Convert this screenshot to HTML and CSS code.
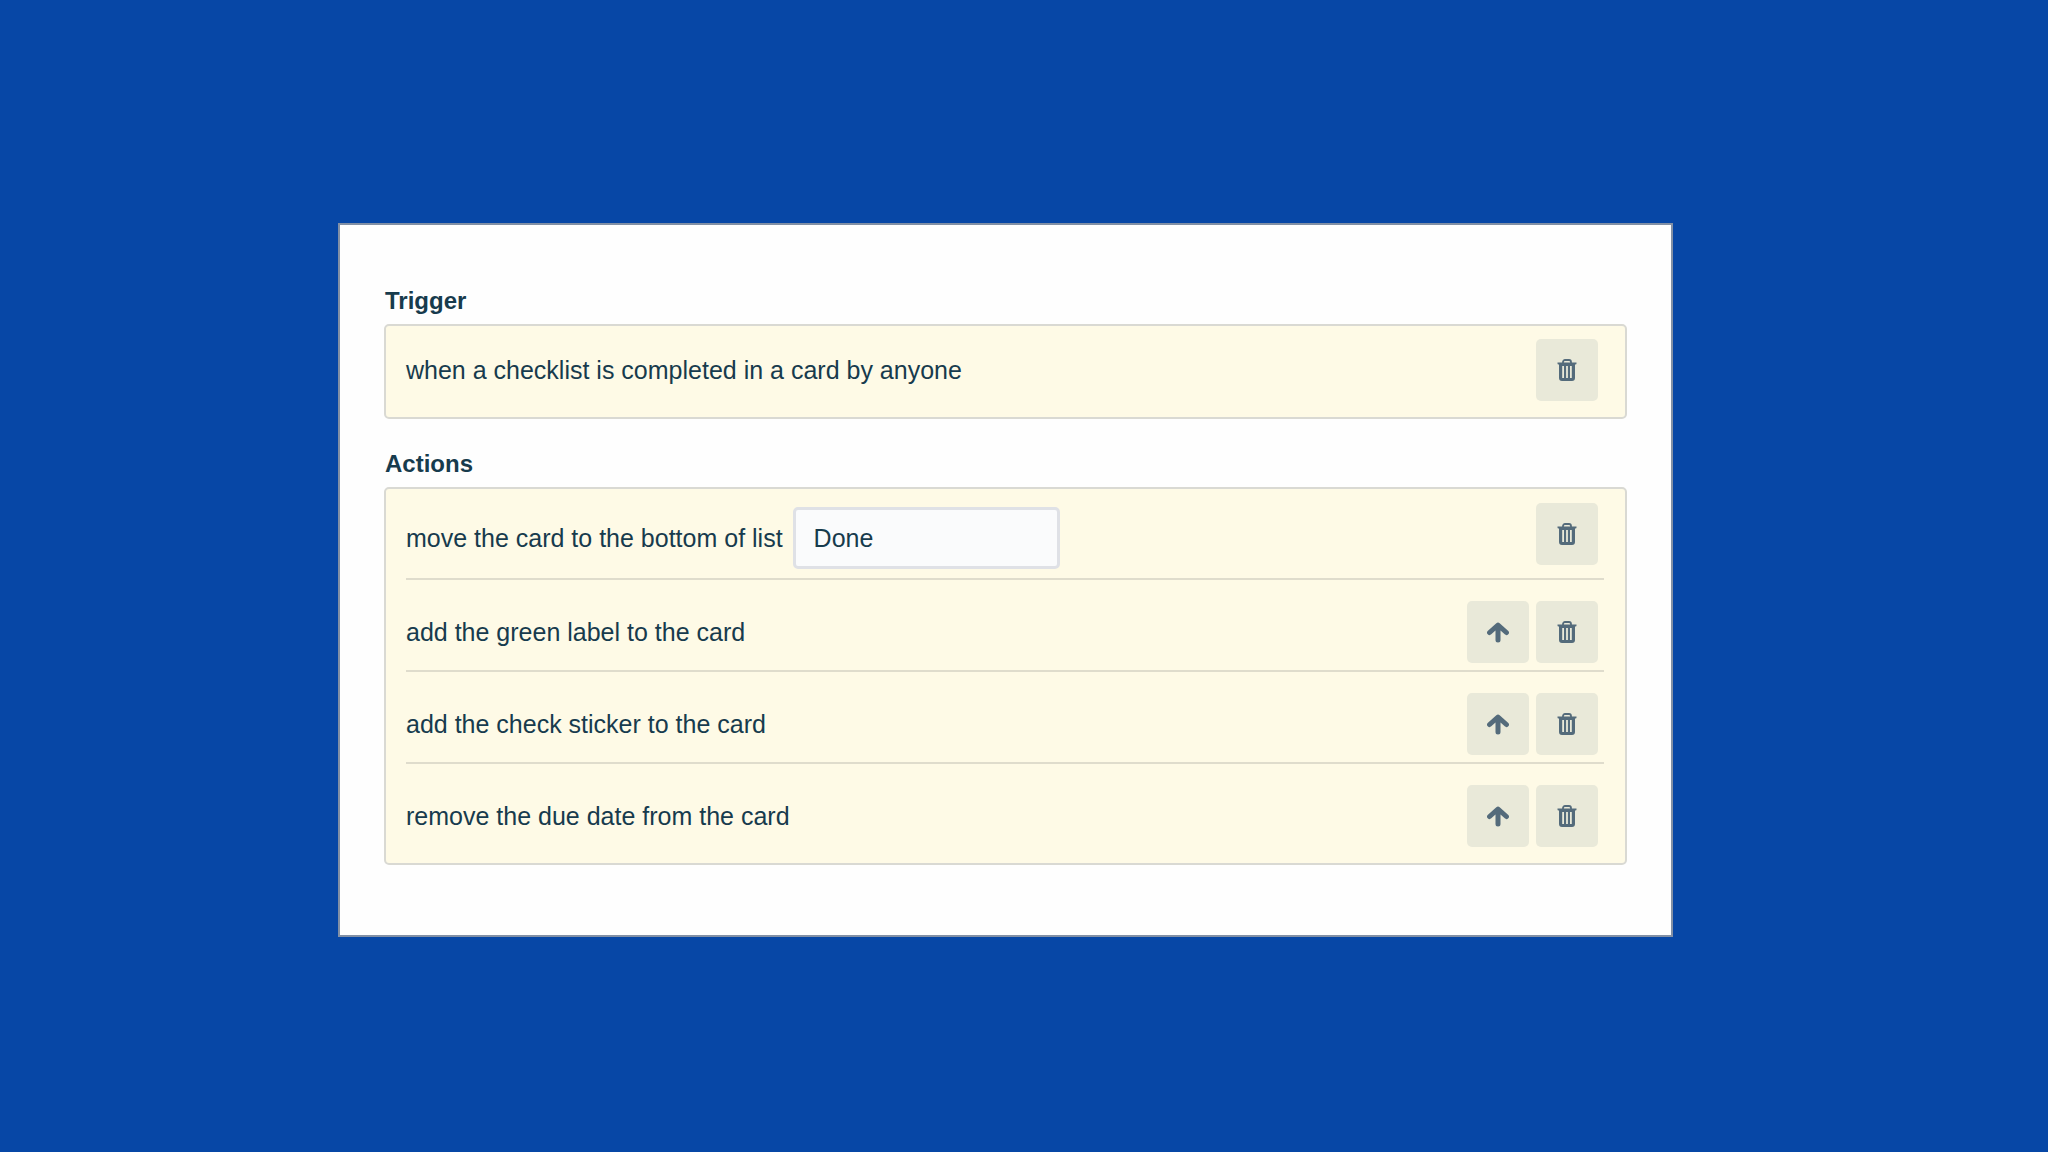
FILE: index.html
```html
<!DOCTYPE html>
<html lang="en">

<head>
    <meta charset="UTF-8">
    <meta name="viewport" content="width=device-width, initial-scale=1.0">
    <title>Automation Rule</title>
    <link rel="stylesheet" href="styles.css">
</head>

<body>
    <!-- Icons shared by the row buttons -->
    <svg class="icon-defs" aria-hidden="true">
        <symbol id="icon-trash" viewBox="0 0 22 22">
            <path d="M7 4V3a2 2 0 0 1 2-2h4a2 2 0 0 1 2 2v1" fill="none" stroke="currentColor" stroke-width="1.800"/>
            <path fill="currentColor" fill-rule="evenodd" d="M1.500 3.500h19v1a1 1 0 0 1-1 1H19V19a3 3 0 0 1-3 3H6a3 3 0 0 1-3-3V5.500h-.5a1 1 0 0 1-1-1zM6.200 7v12h1.800V7zm3.900 0v12h1.800V7zm3.900 0v12h1.800V7z"/>
        </symbol>
        <symbol id="icon-up" viewBox="0 0 22 22">
            <path d="M11 19V5M2.600 11.500L11 4l8.400 7.500" fill="none" stroke="currentColor" stroke-width="5" stroke-linecap="round" stroke-linejoin="round"/>
        </symbol>
    </svg>

    <main class="panel">
        <h2>Trigger</h2>
        <div class="box">
            <div class="row">
                <span class="text">when a checklist is completed in a card by anyone</span>
                <button class="button" type="button" aria-label="Remove trigger">
                    <svg class="icon"><use href="#icon-trash"/></svg>
                </button>
            </div>
        </div>

        <h2>Actions</h2>
        <div class="box">
            <div class="row row-input">
                <div class="field">
                    <label for="list-name">move the card to the bottom of list</label>
                    <input id="list-name" type="text" value="Done">
                </div>
                <button class="button" type="button" aria-label="Remove action">
                    <svg class="icon"><use href="#icon-trash"/></svg>
                </button>
            </div>
            <div class="row">
                <span class="text">add the green label to the card</span>
                <button class="button" type="button" aria-label="Move up">
                    <svg class="icon"><use href="#icon-up"/></svg>
                </button>
                <button class="button" type="button" aria-label="Remove action">
                    <svg class="icon"><use href="#icon-trash"/></svg>
                </button>
            </div>
            <div class="row">
                <span class="text">add the check sticker to the card</span>
                <button class="button" type="button" aria-label="Move up">
                    <svg class="icon"><use href="#icon-up"/></svg>
                </button>
                <button class="button" type="button" aria-label="Remove action">
                    <svg class="icon"><use href="#icon-trash"/></svg>
                </button>
            </div>
            <div class="row">
                <span class="text">remove the due date from the card</span>
                <button class="button" type="button" aria-label="Move up">
                    <svg class="icon"><use href="#icon-up"/></svg>
                </button>
                <button class="button" type="button" aria-label="Remove action">
                    <svg class="icon"><use href="#icon-trash"/></svg>
                </button>
            </div>
        </div>
    </main>
</body>

</html>
```
FILE: styles.css
```css
* {
    box-sizing: border-box;
}

body {
    margin: 0;
    padding: 223px 375px 24px 338px;
    background-color: #0747a6;
    color: #173b4d;
    font-family: "Liberation Sans", Arial, sans-serif;
    font-size: 25px;
    line-height: 30px;
}

.icon-defs {
    display: none;
}

.panel {
    padding: 61px 44px 70px;
    background-color: #fefefe;
    border: 2px solid #8290a5;
}

h2 {
    margin: 0 0 8px;
    padding-left: 1px;
    font-size: 24px;
    line-height: 30px;
}

.box {
    padding: 0 21px 0 20px;
    background-color: #fefae6;
    border: 2px solid #d9d9d3;
    border-radius: 5px;
}

.box + h2 {
    margin-top: 30px;
}

/* Rows */
.row {
    display: flex;
    align-items: center;
    gap: 7px;
    padding: 21px 6px 7px 0;
    border-bottom: 2px solid #dfdccc;
}

.row:first-child {
    padding-top: 13px;
}

.row:last-child {
    padding-bottom: 16px;
    border-bottom: none;
}

.row.row-input {
    align-items: flex-start;
    padding-top: 14px;
    padding-bottom: 9px;
}

.text {
    flex: 1;
}

.field {
    display: flex;
    flex: 1;
    align-items: center;
    gap: 10px;
    margin-top: 4px;
}

.field input {
    width: 267px;
    height: 62px;
    padding: 0 18px;
    background-color: #fafbfc;
    border: 3px solid #dfe1e6;
    border-radius: 5px;
    color: inherit;
    font: inherit;
}

.button {
    display: flex;
    align-items: center;
    justify-content: center;
    width: 62px;
    height: 62px;
    padding: 0;
    background-color: #e9e9d9;
    border: none;
    border-radius: 5px;
    color: #546b7b;
    cursor: pointer;
}

.button:hover {
    background-color: #dfdfce;
}

.icon {
    width: 22px;
    height: 22px;
}
```
